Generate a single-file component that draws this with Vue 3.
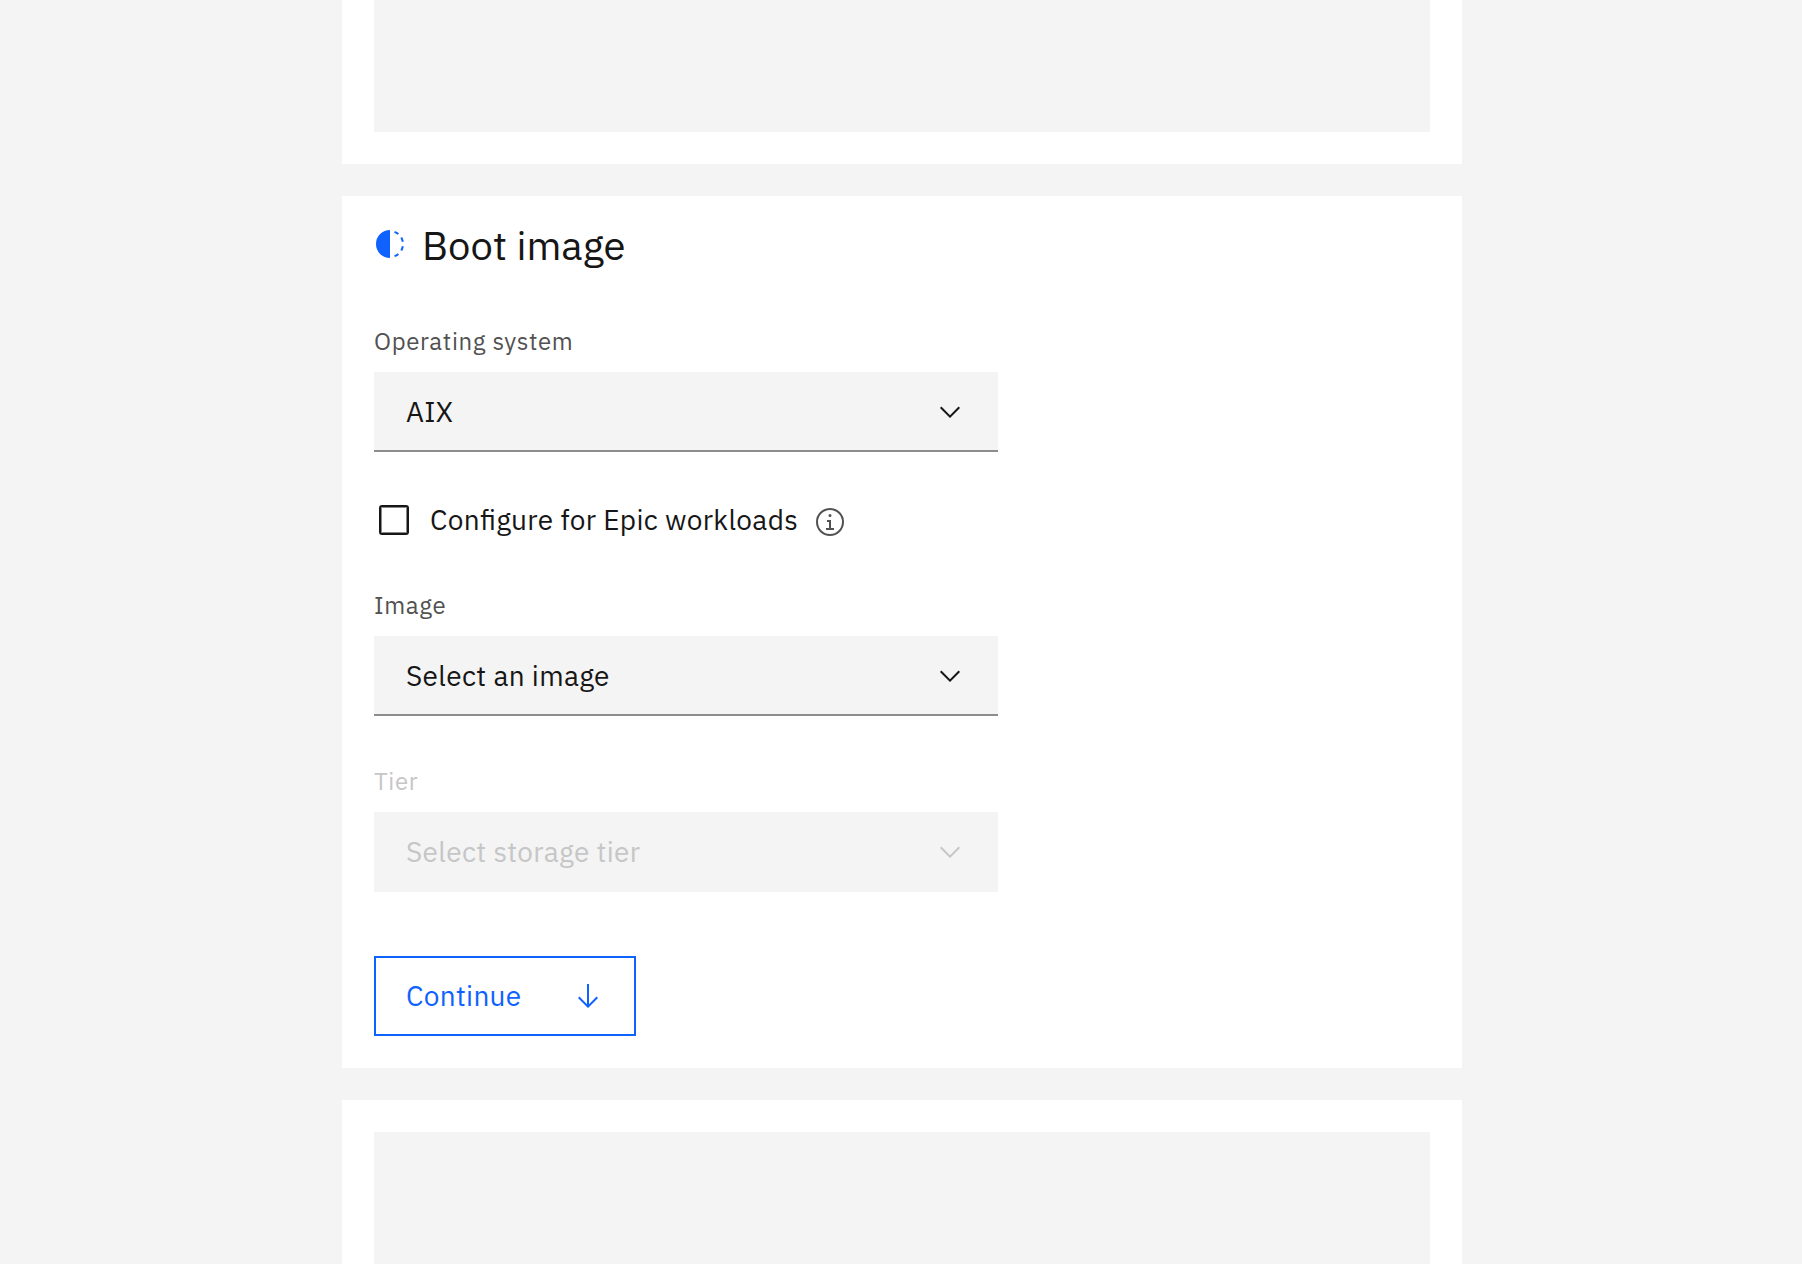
<script setup>
const chevron = 'M8 11L3 6 3.7 5.3 8 9.6 12.3 5.3 13 6z'
</script>

<template>
  <div class="page">
    <section class="card card-top"><div class="block"></div></section>

    <section class="card form">
      <header class="heading">
        <svg class="icon" viewBox="0 0 32 32" aria-hidden="true">
          <path d="M23.7642 6.8593l1.2851-1.5315A13.976 13.976 0 0 0 20.8672 2.887l-.6836 1.8776A11.9729 11.9729 0 0 1 23.7642 6.8593zM27.81 14l1.9677-.4128A13.8888 13.8888 0 0 0 28.14 9.0457L26.4087 10A12.52 12.52 0 0 1 27.81 14zM20.1836 27.2354l.6836 1.8776a13.976 13.976 0 0 0 4.1821-2.4408l-1.2851-1.5315A11.9729 11.9729 0 0 1 20.1836 27.2354zM26.4087 22L28.14 23a14.14 14.14 0 0 0 1.6382-4.5872L27.81 18.0659A12.1519 12.1519 0 0 1 26.4087 22zM16 30V2a14 14 0 0 0 0 28z" />
        </svg>
        <h2>Boot image</h2>
      </header>

      <div class="field os">
        <span class="label">Operating system</span>
        <button class="select" type="button">
          <span>AIX</span>
          <svg class="icon" viewBox="0 0 16 16" aria-hidden="true"><path :d="chevron" /></svg>
        </button>
      </div>

      <div class="check">
        <span class="box" role="checkbox" aria-checked="false"></span>
        <span class="check-text">Configure for Epic workloads</span>
        <svg class="icon info" viewBox="0 0 32 32" aria-hidden="true">
          <path d="M17 22V14H13v2h2v6H12v2h8V22zM16 8a1.5 1.5 0 1 0 1.5 1.5A1.5 1.5 0 0 0 16 8z" />
          <path d="M16 30A14 14 0 1 1 30 16 14 14 0 0 1 16 30zm0-26A12 12 0 1 0 28 16 12 12 0 0 0 16 4z" />
        </svg>
      </div>

      <div class="field image">
        <span class="label">Image</span>
        <button class="select" type="button">
          <span>Select an image</span>
          <svg class="icon" viewBox="0 0 16 16" aria-hidden="true"><path :d="chevron" /></svg>
        </button>
      </div>

      <div class="field tier disabled">
        <span class="label">Tier</span>
        <button class="select" type="button" disabled>
          <span>Select storage tier</span>
          <svg class="icon" viewBox="0 0 16 16" aria-hidden="true"><path :d="chevron" /></svg>
        </button>
      </div>

      <button class="continue" type="button">
        <span>Continue</span>
        <svg class="icon" viewBox="0 0 32 32" aria-hidden="true">
          <path d="M24.59 16.59L17 24.17V4H15V24.17L7.41 16.59 6 18 16 28 26 18z" />
        </svg>
      </button>
    </section>

    <section class="card card-bottom"><div class="block"></div></section>
  </div>
</template>

<style>
body {
  margin: 0;
  background: #f4f4f4;
}
</style>

<style scoped>
.page {
  box-sizing: border-box;
  height: 1264px;
  padding-left: 342px;
  overflow: hidden;
  display: flex;
  flex-direction: column;
  gap: 32px;
  background: #f4f4f4;
  color: #161616;
  font-family: "IBM Plex Sans", "Open Sans", sans-serif;
  font-size: 28px;
  line-height: 36px;
  letter-spacing: 0.32px;
}
.card {
  box-sizing: border-box;
  flex: none;
  width: 1120px;
  padding: 32px;
  background: #fff;
}
.block {
  height: 132px;
  background: #f4f4f4;
}
.card-top {
  padding-top: 0;
}
.card-bottom {
  padding-bottom: 0;
}
.form {
  height: 872px;
  display: flex;
  flex-direction: column;
  align-items: flex-start;
}
.icon {
  display: block;
  flex: none;
  width: 32px;
  height: 32px;
  fill: currentColor;
}
.heading {
  display: flex;
  gap: 16px;
  height: 96px;
}
.heading .icon {
  fill: #0f62fe;
}
h2 {
  margin: -9px 0 0;
  font-size: 40px;
  line-height: 52px;
  font-weight: 400;
  letter-spacing: 0;
}
.field {
  width: 624px;
}
.label {
  display: block;
  height: 48px;
  font-size: 24px;
  line-height: 34px;
  letter-spacing: 0.64px;
  color: #525252;
}
button {
  box-sizing: border-box;
  height: 80px;
  margin: 0;
  display: flex;
  align-items: center;
  justify-content: space-between;
  padding: 0 32px;
  border: 0;
  font: inherit;
  letter-spacing: inherit;
  color: inherit;
}
.select {
  width: 100%;
  background: #f4f4f4;
  box-shadow: inset 0 -2px #8d8d8d;
}
.disabled .label,
.disabled .select {
  color: #c6c6c6;
}
.disabled .select {
  box-shadow: none;
}
.check {
  height: 32px;
  margin-top: 52px;
  padding-left: 5px;
  display: flex;
  align-items: center;
}
.box {
  box-sizing: border-box;
  width: 30px;
  height: 30px;
  border: 2px solid #161616;
  border-radius: 3px;
  box-shadow: inset 0 0 0 1px rgba(22, 22, 22, 0.5);
}
.check-text {
  width: 366px;
  margin-left: 21px;
  white-space: nowrap;
  font-feature-settings: "liga" 1;
}
.info {
  margin: 4px 0 0 18px;
  fill: #525252;
}
.image {
  margin-top: 52px;
}
.tier {
  margin-top: 48px;
}
.continue {
  width: 262px;
  margin-top: 64px;
  border: 2px solid #0f62fe;
  padding: 0 30px;
  background: #fff;
  color: #0f62fe;
}
</style>
